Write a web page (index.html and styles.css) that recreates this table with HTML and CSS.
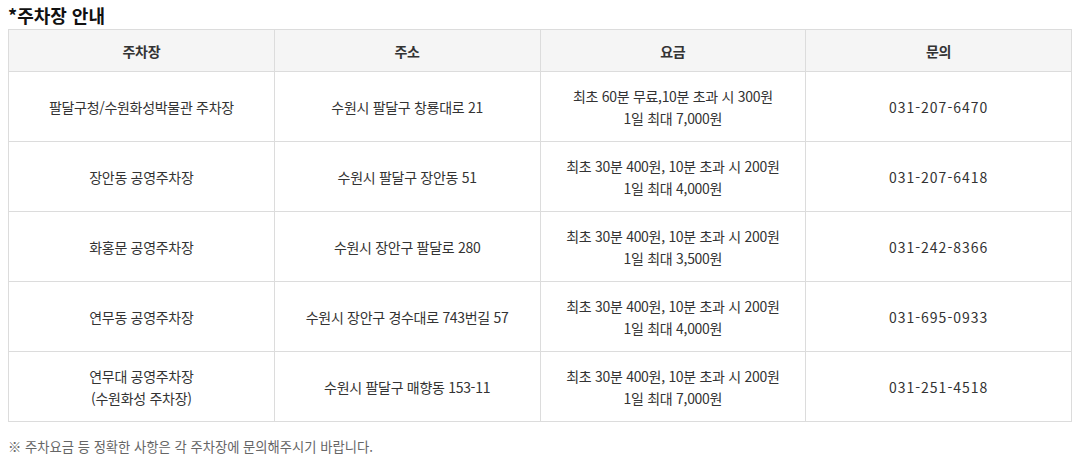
FILE: index.html
```html
<!DOCTYPE html>
<html lang="ko">
<head>
<meta charset="utf-8">
<title>주차장 안내</title>
<link rel="stylesheet" href="styles.css">
</head>
<body>
<div class="wrap">
  <h2 class="title">*주차장 안내</h2>
  <table class="parking">
    <colgroup>
      <col class="c1"><col class="c2"><col class="c3"><col class="c4">
    </colgroup>
    <thead>
      <tr><th>주차장</th><th>주소</th><th>요금</th><th>문의</th></tr>
    </thead>
    <tbody>
      <tr>
        <td>팔달구청/수원화성박물관 주차장</td>
        <td>수원시 팔달구 창룡대로 21</td>
        <td>최초 60분 무료,10분 초과 시 300원<br>1일 최대 7,000원</td>
        <td class="tel">031-207-6470</td>
      </tr>
      <tr>
        <td>장안동 공영주차장</td>
        <td>수원시 팔달구 장안동 51</td>
        <td>최초 30분 400원, 10분 초과 시 200원<br>1일 최대 4,000원</td>
        <td class="tel">031-207-6418</td>
      </tr>
      <tr>
        <td>화홍문 공영주차장</td>
        <td>수원시 장안구 팔달로 280</td>
        <td>최초 30분 400원, 10분 초과 시 200원<br>1일 최대 3,500원</td>
        <td class="tel">031-242-8366</td>
      </tr>
      <tr>
        <td>연무동 공영주차장</td>
        <td>수원시 장안구 경수대로 743번길 57</td>
        <td>최초 30분 400원, 10분 초과 시 200원<br>1일 최대 4,000원</td>
        <td class="tel">031-695-0933</td>
      </tr>
      <tr>
        <td>연무대 공영주차장<br>(수원화성 주차장)</td>
        <td>수원시 팔달구 매향동 153-11</td>
        <td>최초 30분 400원, 10분 초과 시 200원<br>1일 최대 7,000원</td>
        <td class="tel">031-251-4518</td>
      </tr>
    </tbody>
  </table>
  <p class="note">※ 주차요금 등 정확한 사항은 각 주차장에 문의해주시기 바랍니다.</p>
</div>
</body>
</html>
```

FILE: styles.css
```css
html, body {
  margin: 0;
  padding: 0;
  background: #fff;
}
body {
  font-family: "Noto Sans CJK KR", "Noto Sans", sans-serif;
  color: #333;
}
.wrap {
  padding: 3px 9px 0 8px;
}
.title {
  margin: 0;
  font-size: 18px;
  font-weight: 700;
  line-height: 24px;
  color: #111;
  letter-spacing: 0;
}
.parking {
  margin-top: 2px;
  width: 100%;
  border-collapse: collapse;
  table-layout: fixed;
  font-size: 14px;
  letter-spacing: -0.3px;
}
.parking th,
.parking td {
  border: 1px solid #dcdcdc;
  text-align: center;
  vertical-align: middle;
  padding: 0 8px;
}
.parking th {
  height: 41px;
  background: #f5f5f5;
  font-weight: 700;
  color: #333;
}
.parking td {
  height: 69px;
  line-height: 22px;
  color: #333;
}
.parking td.tel {
  letter-spacing: 1px;
}
.note {
  margin: 14px 0 0 0;
  font-size: 13.3px;
  line-height: 22px;
  color: #666;
  letter-spacing: 0;
}
```
